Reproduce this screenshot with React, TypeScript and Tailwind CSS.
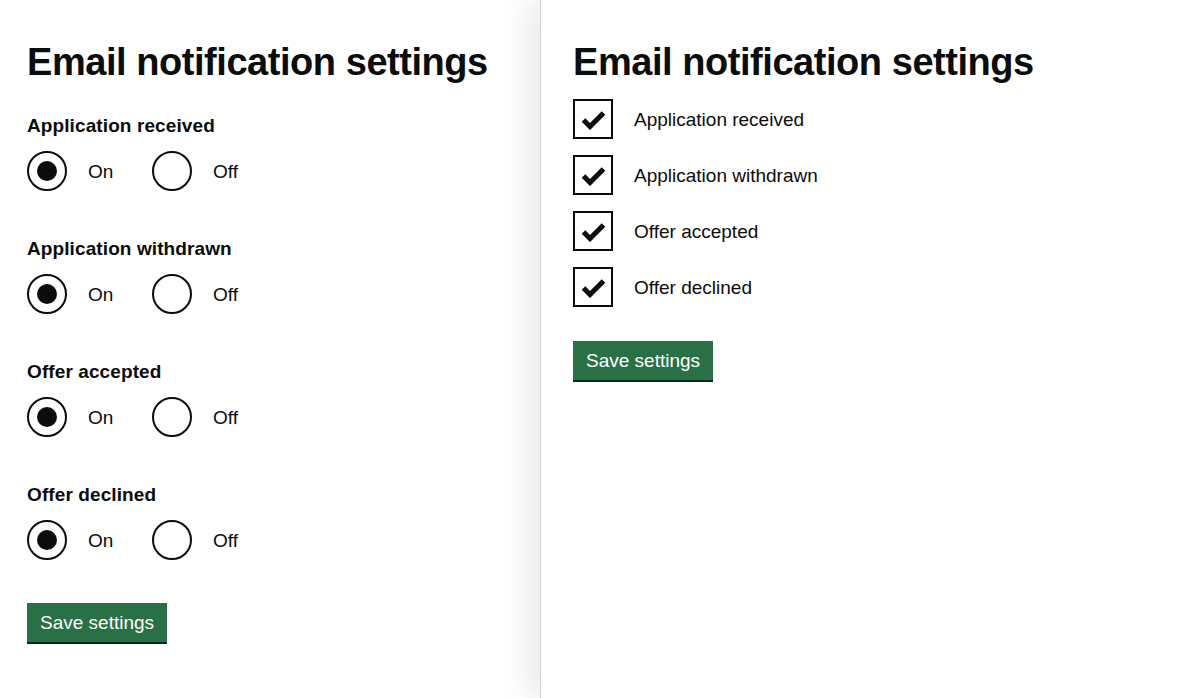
import React from "react"

const font = { fontFamily: '"Liberation Sans", Arial, sans-serif' }

const groups = ["Application received", "Application withdrawn", "Offer accepted", "Offer declined"]

function Radio({ checked, label }: { checked: boolean; label: string }) {
  return (
    <label className="flex items-center w-[125px]">
      <span className="w-10 h-10 rounded-full border-2 border-[#0b0c0c] flex items-center justify-center shrink-0">
        {checked && <span className="w-5 h-5 rounded-full bg-[#0b0c0c]" />}
      </span>
      <span className="ml-[21px] text-[19px] leading-none">{label}</span>
    </label>
  )
}

function Checkbox({ label }: { label: string }) {
  return (
    <label className="flex items-center">
      <span className="w-10 h-10 border-2 border-[#0b0c0c] shrink-0 flex">
        <svg width="36" height="36" viewBox="0 0 36 36">
          <polyline points="8.5,19 15,25.5 28.5,12" fill="none" stroke="#0b0c0c" strokeWidth="5" strokeLinecap="butt" strokeLinejoin="miter" />
        </svg>
      </span>
      <span className="ml-[21px] text-[19px] leading-none">{label}</span>
    </label>
  )
}

function SaveButton() {
  return (
    <button className="bg-[#2a7046] text-white text-[19px] leading-none px-[13px] pt-[10px] pb-[10px] shadow-[0_2px_0_#002d18]">
      Save settings
    </button>
  )
}

export default function App() {
  return (
    <div className="flex h-[698px] bg-white text-[#0b0c0c] overflow-hidden" style={font}>
      <div className="w-[540px] shrink-0 pl-[27px] pt-[43px]">
        <h1 className="text-[38px] font-bold leading-none tracking-[-0.45px]">Email notification settings</h1>
        <div className="mt-[35px] flex flex-col gap-[48px]">
          {groups.map((g) => (
            <div key={g}>
              <div className="text-[19px] font-bold leading-none tracking-[0.1px]">{g}</div>
              <div className="mt-[16px] flex">
                <Radio checked label="On" />
                <Radio checked={false} label="Off" />
              </div>
            </div>
          ))}
        </div>
        <div className="mt-[43px]">
          <SaveButton />
        </div>
      </div>
      <div className="relative flex-1 border-l border-[#d2d2d2] shadow-[-14px_0_28px_rgba(0,0,0,0.08)] pl-[32px] pt-[43px]">
        <h1 className="text-[38px] font-bold leading-none tracking-[-0.45px]">Email notification settings</h1>
        <div className="mt-[18px] flex flex-col gap-4">
          {groups.map((g) => (
            <Checkbox key={g} label={g} />
          ))}
        </div>
        <div className="mt-[34px]">
          <SaveButton />
        </div>
      </div>
    </div>
  )
}
